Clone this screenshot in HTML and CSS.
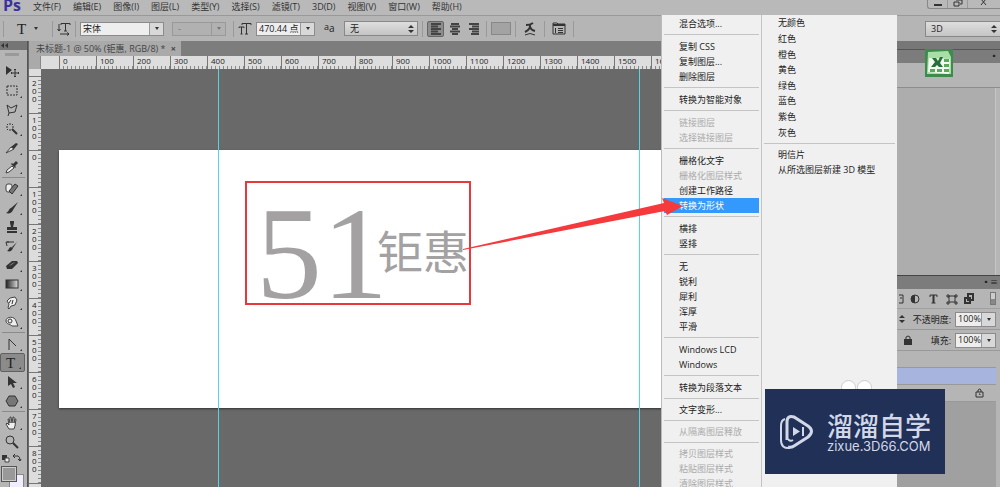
FILE: index.html
```html
<!DOCTYPE html>
<html lang="zh-CN">
<head>
<meta charset="utf-8">
<title>未标题-1</title>
<link rel="stylesheet" href="styles.css">
</head>
<body>
<div class="app">
  <header class="menubar">
    <span class="brand">Ps</span>
    <nav class="menus">
      <button>文件(F)</button><button>编辑(E)</button><button>图像(I)</button><button>图层(L)</button><button>类型(Y)</button><button>选择(S)</button><button>滤镜(T)</button><button>3D(D)</button><button>视图(V)</button><button>窗口(W)</button><button>帮助(H)</button>
    </nav>
    <div class="window-controls">
      <button aria-label="最小化"><svg width="10" height="8"><path d="M1 4h8v2H1z"/></svg></button>
      <button aria-label="还原"><svg width="12" height="8"><path d="M4 0h6v4H8M2 2h5v4H2z" class="line"/></svg></button>
      <button aria-label="关闭" class="close"><svg width="10" height="8"><path d="M2-1l5 6M7-1L2 5" class="line"/></svg></button>
    </div>
  </header>

  <div class="options">
    <i class="divider"></i>
    <button class="tool-t" aria-label="文字工具">T<i class="caret"></i></button>
    <i class="divider"></i>
    <button class="icon" aria-label="切换文本取向"><svg width="14" height="14"><path d="M4 3V1.500h9V3M8.500 1.500V9M7 9h3M2 2v7M.500 7l1.500 2 1.500-2M3 12h9M10 10.500l2 1.500-2 1.500" class="line"/></svg></button>
    <i class="divider"></i>
    <label class="combo family"><select aria-label="字体"><option>宋体</option></select><span><i class="caret"></i></span></label>
    <label class="combo style off"><select aria-label="字形" disabled><option>-</option></select><span><i class="caret"></i></span></label>
    <i class="divider"></i>
    <svg width="14" height="14"><path d="M4 3V1.500h9V3M8.500 1.500V12M7 12h3M1 6V5h5v1M3.500 5v7M2.500 12h2" class="line"/></svg>
    <label class="combo size"><select aria-label="字号"><option>470.44 点</option></select><span><i class="caret"></i></span></label>
    <span class="aa"><small>a</small>a</span>
    <label class="spin alias"><select aria-label="消除锯齿"><option>无</option></select><svg width="6" height="8"><path d="M3 0l3 3H0zM3 8l3-3H0z"/></svg></label>
    <i class="divider"></i>
    <div class="aligns">
      <button class="on" aria-label="左对齐"><svg width="12" height="12"><path d="M1 1h10M1 3.500h7M1 6h10M1 8.500h7M1 11h10" class="bar"/></svg></button>
      <button aria-label="居中"><svg width="12" height="12"><path d="M2 1h8M1 3.500h10M3 6h6M1 8.500h10M3 11h6" class="bar"/></svg></button>
      <button aria-label="右对齐"><svg width="12" height="12"><path d="M1 1h10M4 3.500h7M1 6h10M4 8.500h7M3 11h8" class="bar"/></svg></button>
    </div>
    <i class="divider"></i>
    <button class="swatch" aria-label="文本颜色"></button>
    <i class="divider"></i>
    <button class="icon wide" aria-label="变形文字"><svg width="12" height="14"><path d="M2 3q4 0 7-2M6 2.500Q7 7 1 10M6 5q1 3 5 4" class="line heavy"/><path d="M1 13q5-3 10 0" class="line"/></svg></button>
    <i class="divider"></i>
    <button class="icon wide" aria-label="字符面板"><svg width="14" height="13"><path d="M1 3V1h4l1 1h7v10H1z" class="line"/><path d="M1 2h12v2H1z"/><path d="M6 6.500h5M6 8.500h5M6 10.500h5M3.500 6v5" class="line"/></svg></button>
    <i class="divider"></i>
    <label class="spin workspace"><select aria-label="工作区"><option>3D</option></select><svg width="6" height="8"><path d="M3 0l3 3H0zM3 8l3-3H0z"/></svg></label>
  </div>

  <main class="work">
    <aside class="tools">
      <div class="tools-head"><svg width="8" height="5"><path d="M3 0v5L0 2.500zM7 0v5L4 2.500z"/></svg></div>
      <div class="grip"></div>
      <button aria-label="移动"><svg width="14" height="14"><path d="M1 1v9l6-5z"/><path d="M10 4v8M6 8h8M9 5l1-1 1 1M9 11l1 1 1-1M7 7L6 8l1 1M13 7l1 1-1 1" class="line"/></svg></button>
      <button class="more" aria-label="选框"><svg width="14" height="14"><path d="M2 2h10v9H2z" class="line dash"/></svg></button>
      <button class="more" aria-label="套索"><svg width="14" height="14"><path d="M2 2l4 3 6-3-2 7-6 1zM4 10l-1 3" class="line"/></svg></button>
      <button class="more" aria-label="魔棒"><svg width="14" height="14"><path d="M7 7l5 5" class="line heavy"/><path d="M5 1v2M5 7v2M1 5h2M7 5h2M2 2l1 1M8 2L7 3M2 8l1-1" class="line"/></svg></button>
      <button class="more" aria-label="切片"><svg width="14" height="14"><path d="M1 12l5-6 3 2z" class="pale"/><path d="M6 6l5-4 2 1-4 5z"/></svg></button>
      <button class="more" aria-label="吸管"><svg width="14" height="14"><path d="M1 13l1-3 5-4 2 2-5 4z" class="pale"/><path d="M6 4l1-1 1 1 3-3 2 2-3 3 1 1-1 1z"/></svg></button>
      <hr>
      <button class="more" aria-label="修复画笔"><svg width="14" height="14"><rect x="1" y="2" width="6" height="8" rx="2" class="pale"/><path d="M4 9l6-7 3 2-6 8z" class="mid"/></svg></button>
      <button class="more" aria-label="画笔"><svg width="14" height="14"><path d="M13 1L6 7l2 2zM6 7c-2 0-2 4-5 5 3 1 6 0 7-3z"/></svg></button>
      <button class="more" aria-label="图章"><svg width="14" height="14"><path d="M5 1h4v2L8 7h4v3H2V7h4L5 3zM2 11h10v2H2z"/></svg></button>
      <button class="more" aria-label="历史画笔"><svg width="14" height="14"><path d="M12 3L7 8l1 1zM6 8c-2 0-2 3-4 4 3 1 5 0 6-3z"/><path d="M2 7L1 3h3M2 3h7" class="line"/></svg></button>
      <button class="more" aria-label="橡皮擦"><svg width="14" height="14"><path d="M1 8l6-5h5l1 2-6 6H2z"/><path d="M3 8l5-4h3L6 8z" class="mid"/></svg></button>
      <button class="more" aria-label="渐变"><svg width="14" height="14"><defs><linearGradient id="fade"><stop stop-color="#222"/><stop offset="1" stop-color="#ddd"/></linearGradient></defs><rect x="1" y="3" width="12" height="8" fill="url(#fade)" stroke="#333"/></svg></button>
      <button class="more" aria-label="涂抹"><svg width="14" height="14"><path d="M3 12l1-4L2 5l3-3 5-1 2 3-2 5-4 1-2 3z" class="pale"/><path d="M6 4l-2 3M8 4L7 8" class="line"/></svg></button>
      <button class="more" aria-label="海绵"><svg width="14" height="14"><path d="M1 6c0-5 9-5 10 0l2 5-6 0C5 9 1 9 1 6z" class="pale"/><circle cx="5" cy="6" r="2" class="line"/></svg></button>
      <hr>
      <button class="more" aria-label="钢笔"><svg width="14" height="14"><path d="M4 13V2l7 7" class="line"/></svg></button>
      <button class="more on" aria-label="文字">T</button>
      <button class="more" aria-label="路径选择"><svg width="14" height="14"><path d="M3 1v10l3-2 2 4 2-1-2-4h4z"/></svg></button>
      <button class="more" aria-label="多边形"><svg width="14" height="14"><path d="M4 2h6l3 5-3 5H4L1 7z" class="mid"/></svg></button>
      <hr>
      <button class="more" aria-label="抓手"><svg width="14" height="14"><path d="M4 13L1 8l1-1 2 2-1-6h1l1 4V1h1l1 6 1-6h1v6l1-4h1l-1 7-1 3z" class="pale"/></svg></button>
      <button aria-label="缩放"><svg width="14" height="14"><circle cx="5" cy="5" r="4" class="line"/><path d="M8 8l5 5" class="line heavy"/></svg></button>
      <div class="mini"><svg width="22" height="9"><path d="M2 1h5v5H2z"/><path d="M5 4h4v4H5z" class="pale"/><path d="M14 2h4q2 0 2 5M15 0l-2 2 2 2M18 5l2 2 1-2" class="line"/></svg></div>
      <div class="colors"><i class="back"></i><i class="front"></i></div>
    </aside>

    <section class="doc">
      <div class="tabs"><button class="tab">未标题-1 @ 50% (钜惠, RGB/8) * <b>×</b></button></div>
      <div class="ruler-x"><i class="corner"></i><i class="lead"></i><span>0</span><span>100</span><span>200</span><span>300</span><span>400</span><span>500</span><span>600</span><span>700</span><span>800</span><span>900</span><span>1000</span><span>1100</span><span>1200</span><span>1300</span><span>1400</span><span>1500</span><span>1600</span></div>
      <div class="stage">
        <div class="ruler-y"><i class="lead"></i><span>200</span><span>100</span><span>0</span><span>100</span><span>200</span><span>300</span><span>400</span><span>500</span><span>600</span><span>700</span><span>800</span><span></span></div>
        <div class="view">
          <div class="artboard"></div>
          <div class="digits">51</div>
          <div class="hanzi">钜惠</div>
          <i class="guide first"></i><i class="guide second"></i>
          <i class="frame"></i>
        </div>
      </div>
    </section>

    <aside class="panels">
      <div class="bar-top"></div>
      <div class="bar-sub">▪</div>
      <div class="panel-head"></div>
      <div class="panel-body"></div>
      <div class="bar-sub layers-bar">▪≡</div>
      <div class="filters">
        <svg width="84" height="12"><path d="M0 2h4v8H0M1 5h2" class="line"/><circle cx="16" cy="6" r="4" class="line"/><path d="M16 2a4 4 0 000 8z"/><path d="M31 4V2h7v2M32.500 10h4" class="line"/><path d="M34.500 2v8" class="line heavy"/><path d="M50 3h6v6h-6zM48 2h2v2h-2zM56 2h2v2h-2zM48 9h2v2h-2zM56 9h2v2h-2z" class="line"/><path d="M69 1h5v6h-5zM66 5h5v5h-5z" class="line heavy"/></svg>
        <i class="toggle"></i>
      </div>
      <div class="row"><svg width="6" height="8"><path d="M3 0l3 3H0zM3 8l3-3H0z"/></svg><label for="opacity">不透明度:</label><span class="combo pct"><input id="opacity" value="100%"><span><i class="caret"></i></span></span></div>
      <div class="row fill"><svg width="8" height="10"><path d="M0 4h8v6H0z"/><path d="M2 4V2q2-2 4 0v2" class="line"/></svg><label for="fill">填充:</label><span class="combo pct"><input id="fill" value="100%"><span><i class="caret"></i></span></span></div>
      <ul class="layers"><li></li><li class="picked"></li><li><svg width="9" height="10"><path d="M1 4h7v5H1zM3 4V2q2-2 3 0v2M4 6h1v1" class="line"/></svg></li></ul>
    </aside>
  </main>

  <svg class="sheet" width="28" height="28" viewBox="0 0 28 28"><path d="M0 0h28v28H0z" fill="#3f8b4d"/><path d="M3 3l20-1 3 6v17H2z" fill="#a9dfa5"/><path d="M4 9l21 1-1 15-21-2z" fill="#f2fbef"/><path d="M7 9h4l2 3 2-4h3l-3 6 3 4h-4l-2-2-2 2H6l4-5z" fill="#28703a"/><path d="M19 10h5v3h-5zM19 15h5v3h-5zM19 20h5v3h-5zM12 20h5v3h-5zM5 20h5v3H5z" fill="#58aa5d"/></svg>

  <div class="popup">
    <div class="menu" role="menu">
      <button>混合选项...</button>
      <hr>
      <button>复制 CSS</button><button>复制图层...</button><button>删除图层</button>
      <hr>
      <button>转换为智能对象</button>
      <hr>
      <button disabled>链接图层</button><button disabled>选择链接图层</button>
      <hr>
      <button>栅格化文字</button><button disabled>栅格化图层样式</button><button>创建工作路径</button><button class="hot">转换为形状</button>
      <hr>
      <button>横排</button><button>竖排</button>
      <hr>
      <button>无</button><button>锐利</button><button>犀利</button><button>浑厚</button><button>平滑</button>
      <hr>
      <button>Windows LCD</button><button>Windows</button>
      <hr>
      <button>转换为段落文本</button>
      <hr class="compact">
      <button>文字变形...</button>
      <hr class="compact">
      <button disabled>从隔离图层释放</button>
      <hr class="compact">
      <button disabled>拷贝图层样式</button><button disabled>粘贴图层样式</button><button disabled>清除图层样式</button>
    </div>
    <div class="menu colors-menu" role="menu">
      <div class="color-list"><button>无颜色</button><button>红色</button><button>橙色</button><button>黄色</button><button>绿色</button><button>蓝色</button><button>紫色</button><button>灰色</button></div>
      <hr class="compact">
      <button>明信片</button><button>从所选图层新建 3D 模型</button>
    </div>
  </div>

  <svg class="arrow" width="222" height="56"><path d="M1 51L202 5l-2-5 21 8-16 9-2-4L1 52z" fill="#f5393c"/></svg>
  <i class="ear left"></i><i class="ear right"></i>
  <div class="badge">
    <svg width="34" height="36" viewBox="0 0 34 36"><path d="M5 5Q1 6 1 12v14q0 9 9 8" fill="none" stroke="#d3d8e8" stroke-width="2"/><path d="M7 26V8q0-7 7-5l14 9q7 5 0 11l-14 9q-3 2-6 1" fill="none" stroke="#d3d8e8" stroke-width="3"/><path d="M8 25q2 3 5 1" fill="none" stroke="#d3d8e8" stroke-width="2"/><path d="M13 13l7 4.500-7 4.500zM22 13h2v9h-2z" fill="#d3d8e8"/></svg>
    <div class="badge-text"><strong>溜溜自学</strong><span>zixue.3D66.COM</span></div>
  </div>
</div>
</body>
</html>
```

FILE: styles.css
```css
* { box-sizing: border-box; }
body {
  margin: 0;
  font: 9px/15px "Open Sans", "Noto Sans CJK SC", sans-serif;
  color: #222;
  background: #696969;
}
button, select, input { font: inherit; color: inherit; margin: 0; padding: 0; border: 0; background: none; }
button { text-align: left; white-space: nowrap; }
svg { display: block; flex: none; fill: #333; }
.line { fill: none; stroke: #333; stroke-width: 1; }
.heavy { stroke-width: 2; }
.bar { stroke: #444; stroke-width: 2; }
.dash { stroke-dasharray: 2 1; }
.pale { fill: #eee; stroke: #444; }
.mid { fill: #777; stroke: #333; }
.app { position: relative; display: flex; flex-direction: column; height: 100vh; overflow: hidden; }

.menubar { display: flex; height: 16px; background: #b9b9b9; border-bottom: 1px solid #999; }
.brand { width: 33px; padding-left: 3px; font: bold 16px/10px "Open Sans", sans-serif; color: #3b3399; }
.menus { display: flex; gap: 12px; flex: 1; }
.menus button { line-height: 11px; height: 12px; color: #333; }
.window-controls { display: flex; height: 9px; border: 1px solid #888; border-top: 0; border-right: 0; border-radius: 0 0 0 3px; }
.window-controls button { width: 20px; display: flex; justify-content: center; border-right: 1px solid #999; overflow: hidden; }
.window-controls .close { width: 32px; border: 0; }

.options { display: flex; align-items: center; gap: 4px; height: 25px; padding-left: 3px; background: #b5b5b5; }
.divider { width: 1px; height: 16px; background: #999; flex: none; }
.caret { display: inline-block; border: 2px solid transparent; border-top: 3px solid #333; border-bottom: 0; }
.tool-t { display: flex; align-items: center; gap: 8px; width: 40px; padding-left: 9px; font: 15px/16px "Liberation Serif", serif; }
.icon.wide { width: 20px; display: flex; justify-content: center; }
.combo { display: flex; height: 14px; border: 1px solid #8b8b8b; background: #eee; }
.combo > span { width: 14px; display: flex; align-items: center; justify-content: center; border-left: 1px solid #999; background: #d8d8d8; }
.combo select, .combo input { flex: 1; min-width: 0; appearance: none; padding-left: 2px; line-height: 12px; }
.family { width: 84px; }
.style { width: 54px; margin: 0 3px 0 4px; }
.off, .off > span { background: #b1b1b1; border-color: #999; }
.off select { padding-left: 5px; opacity: 1; color: #777; }
.off .caret { border-top-color: #777; }
.size { width: 59px; }
.aa { width: 21px; padding-left: 5px; font-size: 10px; display: flex; }
.aa small { font-size: 9px; line-height: 12px; }
.spin { display: flex; align-items: center; height: 15px; padding-right: 3px; border: 1px solid #888; background: linear-gradient(#dedede, #c4c4c4); }
.spin select { flex: 1; appearance: none; padding-left: 5px; line-height: 13px; }
.alias { width: 74px; }
.aligns { display: flex; gap: 2px; }
.aligns button { width: 17px; height: 16px; display: flex; align-items: center; justify-content: center; }
.aligns .on { background: #8d8d8d; border: 1px solid #666; border-radius: 2px; }
.swatch { width: 20px; height: 13px; background: #a3a3a3; border: 1px solid #888; }
.workspace { width: 75px; height: 16px; margin-left: auto; border-right: 0; }

.work { flex: 1; display: flex; min-height: 0; }
.tools { width: 28px; flex: none; background: #b5b5b5; border-right: 1px solid #555; overflow: hidden; }
.tools-head { height: 9px; background: #757575; padding: 2px 1px; }
.grip { height: 3px; width: 14px; margin: 3px 5px 6px; background: #999; }
.tools button { display: flex; position: relative; width: 25px; height: 19px; padding-left: 5px; align-items: center; }
.tools .more::after { content: ""; position: absolute; right: 3px; bottom: 2px; border: 1px solid #333; border-top-color: transparent; border-left-color: transparent; }
.tools .on { background: #8b8b8b; border: 1px solid #606060; border-radius: 2px; font: 15px/16px "Liberation Serif", serif; }
.tools hr { height: 1px; margin: 1px 2px; border: 0; background: #8b8b8b; }
.mini { height: 15px; padding-top: 3px; }
.colors { display: grid; grid-template-columns: 8px 8px 7px; grid-template-rows: 8px 8px 8px; padding-left: 1px; }
.back { grid-area: 2 / 2 / 4 / 4; background: #eef; border: 1px solid #888; }
.front { grid-area: 1 / 1 / 3 / 3; background: #999; border: 1px solid #555; outline: 1px solid #ccc; outline-offset: -2px; }

.doc { flex: 1; min-width: 0; display: flex; flex-direction: column; padding-left: 1px; background: #696969; }
.tabs { height: 15px; background: #7d7d7d; display: flex; }
.tab { padding: 0 5px 0 7px; background: #aaa; color: #444; line-height: 15px; }
.tab b { padding-left: 3px; }
.ruler-x { display: flex; height: 13px; overflow: hidden; background: #ddd; }
.corner { width: 12px; flex: none; background: #aaa; border-right: 1px solid #888; }
.ruler-x .lead { width: 18px; flex: none; }
.ruler-x span { width: 37px; flex: none; padding-left: 3px; border-left: 1px solid #777; font-size: 8px; line-height: 10px; background: repeating-linear-gradient(90deg, transparent 0 3px, #888 3px 4px) bottom / 100% 3px no-repeat; }
.stage { flex: 1; display: flex; min-height: 0; }
.ruler-y { width: 12px; flex: none; background: #ddd; overflow: hidden; }
.ruler-y .lead { display: block; height: 7px; }
.ruler-y span { display: block; height: 37px; padding: 2px 4px 0 3px; border-top: 1px solid #777; font-size: 8px; line-height: 8px; word-break: break-all; width: 12px; background: repeating-linear-gradient(transparent 0 3px, #888 3px 4px) right / 3px 100% no-repeat; }
.view { position: relative; flex: 1; overflow: hidden; }
.artboard { position: absolute; left: 18px; right: 0; top: 81px; height: 258px; background: #fff; box-shadow: 0 1px 2px #333; }
.digits { position: absolute; left: 215px; top: 119px; font: 132px/132px "Liberation Serif", serif; color: #a3a1a1; }
.hanzi { position: absolute; left: 336px; top: 150px; font: 400 46px/60px "Noto Sans CJK SC", sans-serif; color: #a3a1a1; }
.guide { position: absolute; top: 0; bottom: 0; width: 1px; background: #55d5df; }
.first { left: 177px; }
.second { left: 598px; }
.frame { position: absolute; left: 204px; top: 112px; width: 226px; height: 124px; border: 2px solid #e8383c; }

.panels { width: 103px; flex: none; display: flex; flex-direction: column; background: #b5b5b5; }
.bar-top { height: 9px; background: #777; border-bottom: 1px solid #555; }
.bar-sub { height: 13px; padding-right: 2px; text-align: right; font-size: 8px; line-height: 12px; background: #7c7c7c; }
.panel-head { height: 25px; border-bottom: 1px solid #8d8d8d; }
.panel-body { height: 187px; margin-right: 4px; background: #adadad; border-right: 1px solid #c5c5c5; }
.layers-bar { height: 14px; border-top: 1px solid #444; }
.filters { height: 20px; display: flex; align-items: center; gap: 7px; padding-left: 2px; border-bottom: 1px solid #a0a0a0; }
.toggle { width: 6px; height: 13px; border: 1px solid #777; background: linear-gradient(#ccc 50%, #888 50%); }
.row { height: 21px; display: flex; align-items: center; padding: 0 4px 0 2px; border-bottom: 1px solid #999; }
.fill { padding-left: 7px; }
.row label { flex: 1; text-align: right; white-space: nowrap; padding-right: 4px; color: #222; }
.pct { width: 41px; height: 15px; }
.layers { flex: 1; list-style: none; margin: 0; padding: 0; background: #a0a0a0; border-right: 4px solid #b5b5b5; }
.layers li { height: 17px; display: flex; justify-content: flex-end; align-items: center; padding-right: 12px; background: #b5b5b5; border-bottom: 1px solid #999; }
.layers .picked { background: #a7b5de; }

.sheet { position: absolute; right: 47px; top: 49px; }
.popup { position: absolute; right: 103px; top: 15px; bottom: 0; width: 236px; display: flex; overflow: hidden; background: #f0f0f0; border-left: 1px solid #bbb; }
.menu { width: 100px; flex: none; padding: 1px 2px; border-right: 1px solid #c4c4c4; }
.menu button { display: block; width: 100%; height: 15px; padding-left: 15px; line-height: 15px; }
.menu button:disabled { color: #aaa; }
.menu .hot { background: #3399fd; color: #fff; }
.menu hr { height: 1px; margin: 3px 0 4px; border: 0; background: #c4c4c4; }
.menu .compact { margin: 3px 0; }
.colors-menu { flex: 1; border: 0; padding-top: 0; }
.colors-menu button { padding-left: 14px; }
.color-list { display: grid; grid-auto-rows: 1fr; height: 125px; align-items: center; }

.arrow { position: absolute; left: 462px; top: 198px; overflow: visible; }
.ear { position: absolute; top: 380px; width: 15px; height: 15px; border: 1px solid #ccc; border-radius: 50%; background: #fff; }
.ear.left { right: 144px; }
.ear.right { right: 128px; }
.badge { position: absolute; right: 55px; top: 389px; width: 180px; height: 85px; display: flex; align-items: center; gap: 13px; padding-left: 15px; background: #203056; color: #d3d8e8; }
.badge svg { fill: none; }
.badge-text { display: flex; flex-direction: column; }
.badge strong { font: 500 26px/28px "Noto Sans CJK SC", sans-serif; }
.badge span { font: 13px/14px "Inter", sans-serif; }
```
